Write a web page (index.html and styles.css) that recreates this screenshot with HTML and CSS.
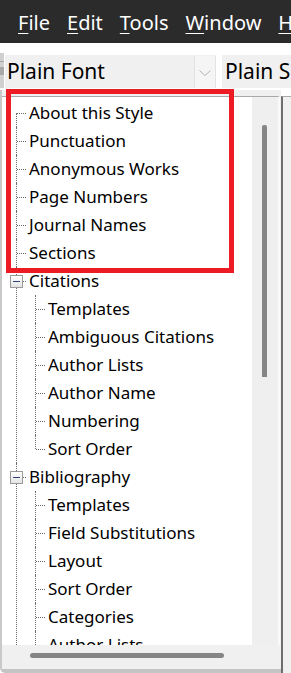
FILE: index.html
```html
<!DOCTYPE html>
<html lang="en">

<head>
    <meta charset="UTF-8">
    <meta name="viewport" content="width=device-width, initial-scale=1.0">
    <title>Output Style Editor</title>
    <link rel="stylesheet" href="styles.css">
</head>

<body>
    <!-- Application menu -->
    <div class="menubar">
        <span class="menu-item"><u>F</u>ile</span>
        <span class="menu-item"><u>E</u>dit</span>
        <span class="menu-item"><u>T</u>ools</span>
        <span class="menu-item"><u>W</u>indow</span>
        <span class="menu-item"><u>H</u>elp</span>
    </div>

    <!-- Font toolbar -->
    <div class="toolbar">
        <div class="grip"></div>
        <div class="combo font-combo">
            <span class="combo-text">Plain Font</span>
            <span class="combo-button">
                <svg width="12" height="6" viewBox="0 0 12 6">
                    <path d="M0.5 0.5 L6 5.5 L11.5 0.5" fill="none" stroke="#b4b4b4" stroke-width="1"/>
                </svg>
            </span>
        </div>
        <div class="combo size-combo">
            <span class="combo-text">Plain Size</span>
        </div>
    </div>

    <div class="workspace">
        <div class="tree-panel">
            <div class="tree-view">
                <ul class="tree">
                    <li><div class="row">About this Style</div></li>
                    <li><div class="row">Punctuation</div></li>
                    <li><div class="row">Anonymous Works</div></li>
                    <li><div class="row">Page Numbers</div></li>
                    <li><div class="row">Journal Names</div></li>
                    <li><div class="row">Sections</div></li>
                    <li class="group">
                        <div class="row"><span class="expander"></span>Citations</div>
                        <ul class="children closed">
                            <li><div class="row">Templates</div></li>
                            <li><div class="row">Ambiguous Citations</div></li>
                            <li><div class="row">Author Lists</div></li>
                            <li><div class="row">Author Name</div></li>
                            <li><div class="row">Numbering</div></li>
                            <li><div class="row">Sort Order</div></li>
                        </ul>
                    </li>
                    <li class="group">
                        <div class="row"><span class="expander"></span>Bibliography</div>
                        <ul class="children">
                            <li><div class="row">Templates</div></li>
                            <li><div class="row">Field Substitutions</div></li>
                            <li><div class="row">Layout</div></li>
                            <li><div class="row">Sort Order</div></li>
                            <li><div class="row">Categories</div></li>
                            <li><div class="row">Author Lists</div></li>
                        </ul>
                    </li>
                </ul>
            </div>
            <div class="vscroll"><div class="vthumb"></div></div>
            <div class="hscroll"><div class="hthumb"></div></div>
            <div class="corner"></div>
        </div>
        <div class="editor-pane"></div>

        <!-- annotation box drawn over the first tree items -->
        <div class="highlight"></div>
    </div>
</body>

</html>
```

FILE: styles.css
```css
* {
    margin: 0;
    padding: 0;
    box-sizing: border-box;
}

body {
    width: 291px;
    height: 673px;
    overflow: hidden;
    background: #fff;
    font-family: 'Noto Sans', 'Open Sans', sans-serif;
    color: #000;
}

/* menu bar */
.menubar {
    height: 43px;
    background: #2b2b2b;
    display: flex;
    align-items: center;
    padding-left: 18px;
    gap: 17px;
    white-space: nowrap;
    overflow: hidden;
}

.menu-item {
    color: #fff;
    font-size: 20px;
    line-height: 24px;
    padding-top: 2px;
    flex: none;
}

.menu-item u {
    text-decoration-thickness: 1px;
    text-underline-offset: 3px;
}

/* toolbar with the two combo boxes */
.toolbar {
    height: 47px;
    display: flex;
    align-items: flex-start;
    padding-top: 12px;
}

.grip {
    width: 4px;
    height: 35px;
    background: linear-gradient(#d0d0d0 0 8px, #a8a8a8 8px 9px, #d0d0d0 9px 14px, #a8a8a8 14px 22px, #d0d0d0 22px);
    margin-top: -2px;
    flex: none;
}

.combo {
    height: 33px;
    background: #f0f0f0;
    display: flex;
    align-items: center;
    font-size: 21px;
    white-space: nowrap;
    overflow: hidden;
    flex: none;
}

.font-combo {
    width: 211px;
    margin-left: 1px;
    padding-left: 2px;
}

.combo-text {
    flex: 1;
    line-height: 33px;
}

.combo-button {
    width: 22px;
    height: 32px;
    border-left: 1px solid #e2e2e2;
    border-right: 1px solid #e2e2e2;
    background: #f5f5f5;
    display: flex;
    align-items: center;
    justify-content: center;
    padding-top: 3px;
}

.size-combo {
    margin-left: 6px;
    width: 80px;
    padding-left: 3px;
}

/* main area */
.workspace {
    position: relative;
    height: 583px;
    display: flex;
}

.tree-panel {
    width: 281px;
    height: 583px;
    display: grid;
    grid-template-columns: 250px 28px;
    grid-template-rows: 6px 549px 24px;
    border-left: 2px solid #c9c9c9;
    border-bottom: 4px solid #c4c4c4;
    border-bottom-left-radius: 5px;
    background: #f0f0f0;
}

.tree-view {
    grid-column: 1;
    grid-row: 2;
    background: #fff;
    border-top: 1px solid #a9a9a9;
    overflow: hidden;
    padding-top: 2px;
}

.vscroll {
    grid-column: 2;
    grid-row: 2;
    background: #efefef;
    border-top: 1px solid #a9a9a9;
    border-right: 2px solid #fafafa;
}

.vthumb {
    width: 5px;
    height: 252px;
    margin: 28px 0 0 10px;
    background: #858585;
    border-radius: 2px 2px 0 0;
}

.hscroll {
    grid-column: 1;
    grid-row: 3;
    background: #f0f0f0;
    padding-top: 8px;
}

.hthumb {
    width: 194px;
    height: 5px;
    margin-left: 28px;
    background: #858585;
    border-radius: 3px;
}

.corner {
    grid-column: 2;
    grid-row: 3;
    background: #f0f0f0;
}

.editor-pane {
    flex: 1;
    height: 579px;
    margin-top: 6px;
    border-left: 2px solid #6e6e6e;
    border-top: 1px solid #a9a9a9;
    background: #f0f0f0;
}

/* tree */
.tree,
.children {
    list-style: none;
}

.tree li {
    position: relative;
}

.row {
    height: 28px;
    line-height: 28px;
    padding-left: 27px;
    font-size: 17px;
    white-space: nowrap;
    position: relative;
}

/* dotted connectors */
.tree li::after {
    content: '';
    position: absolute;
    left: 14px;
    top: 0;
    bottom: 0;
    border-left: 1px dotted #6a6a6a;
}

.tree > li:first-child::after {
    top: 14px;
}

.closed > li:last-child::after {
    bottom: auto;
    height: 14px;
}

.tree li::before {
    content: '';
    position: absolute;
    left: 15px;
    top: 14px;
    width: 9px;
    border-top: 1px dotted #6a6a6a;
}

.children {
    padding-left: 19px;
}

.expander {
    position: absolute;
    left: 8px;
    top: 8px;
    width: 13px;
    height: 13px;
    border: 1px solid #9a9a9a;
    background: linear-gradient(#ffffff, #e4e4e4);
    z-index: 1;
}

.expander::after {
    content: '';
    position: absolute;
    left: 2px;
    top: 5px;
    width: 7px;
    height: 1px;
    background: #2e3f7c;
}

/* red annotation box */
.highlight {
    position: absolute;
    left: 6px;
    top: -1px;
    width: 228px;
    height: 184px;
    border: 5px solid #ed1c24;
}
```
